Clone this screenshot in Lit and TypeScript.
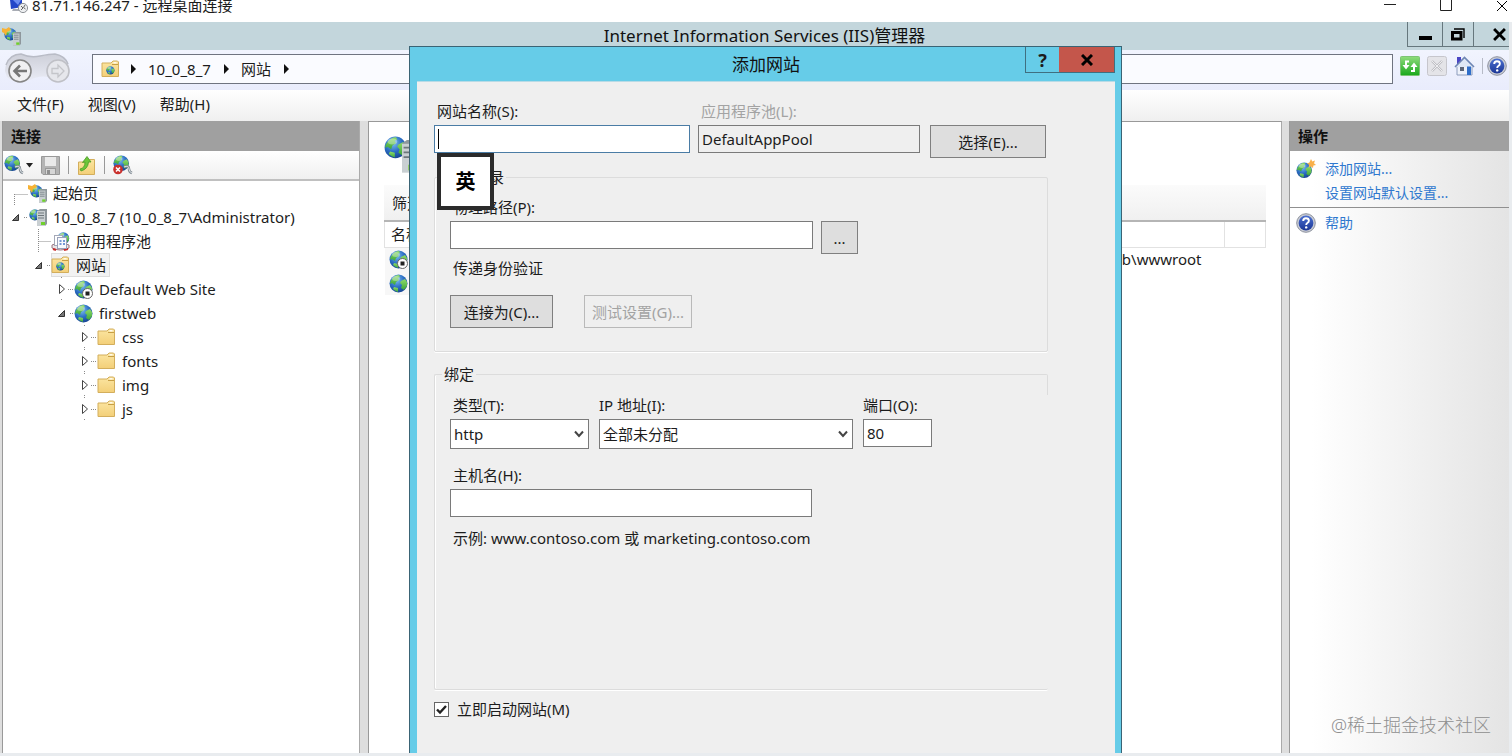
import { LitElement, html, css, svg } from "lit";
import { customElement, state } from "lit/decorators.js";
import { classMap } from "lit/directives/class-map.js";
import { styleMap } from "lit/directives/style-map.js";

type Branch = "start" | "leaf" | "open" | "closed";

interface TreeNode {
  text: string;
  level: number;
  branch: Branch;
  icon: () => unknown;
}

const land = svg`
  <path d="M3 5 Q6 1 10 1 L11 3 L9 4 L10 6 L7 8 L6 11 L3 9 L1 10 Q1 7 3 5Z" fill="url(#land)"/>
  <path d="M12 7 L16 5 L18 8 L18 12 L15 16 L12 14 L13 11 L11 9Z" fill="url(#land)"/>
  <path d="M5 13 L9 14 L9 18 Q6 17 4 15Z" fill="url(#land)"/>`;

const globeShape = svg`
  <circle cx="9.5" cy="9.5" r="9" fill="url(#sea)"/>
  ${land}
  <ellipse cx="7" cy="4.5" rx="4" ry="2.5" fill="#fff" opacity=".35"/>`;

const serverShape = svg`
  <path d="M0 2 L3 0 H10 V15 L8 17 H0Z" fill="#8e979c"/>
  <path d="M0 2 H8 V17 H0Z" fill="#c9cfd2"/>
  <path d="M1 4 H7 M1 6.5 H7 M1 9 H7" stroke="#6f787d" stroke-width="1"/>
  <rect x="4" y="13" width="4" height="3" fill="#6fd02c"/>`;

const icon = (w: number, h: number, body: unknown, box = `0 0 ${w} ${h}`) =>
  html`<svg class="icon" width=${w} height=${h} viewBox=${box} aria-hidden="true">${body}</svg>`;

const globe = () => icon(19, 19, globeShape);

const globeStopped = () =>
  icon(19, 19, svg`${globeShape}
    <circle cx="13.5" cy="13.5" r="5" fill="#fff" stroke="#666"/>
    <rect x="11.5" y="11.5" width="4" height="4" fill="#222"/>`);

const startIcon = () =>
  icon(19, 19, svg`
    <g transform="translate(2 1) scale(.68)">${globeShape}</g>
    <path d="M0 1 L4 2 L7 0 L9 3 L5 5 L4 9 L2 6 L0 5Z" fill="#f7b234"/>
    <g transform="translate(11 5) scale(.8)">${serverShape}</g>`);

const serverIcon = () =>
  icon(19, 19, svg`
    <g transform="translate(1 1) scale(.62)">${globeShape}</g>
    <g transform="translate(9 1)">${serverShape}</g>`);

const poolIcon = () =>
  icon(19, 19, svg`
    <g transform="translate(6 0) scale(.66)">${globeShape}</g>
    <path d="M1 13 Q9 9 18 13 V16 Q9 20 1 16Z" fill="#e9e4e6" stroke="#9a7480"/>
    <path d="M2 17 L5 18 M13 18 L17 17" stroke="#c92a2a" stroke-width="2"/>
    <rect x="3.5" y="3.5" width="8" height="10" fill="#fff" stroke="#a5a9b8"/>
    <rect x="6.5" y="5.5" width="9" height="11" fill="#f7f9fd" stroke="#9aa2ba"/>
    <path d="M8.5 9 H10.5 M8.5 12 H10.5 M12 9 H14 M12 12 H14" stroke="#4a78c8" stroke-width="1.6"/>`);

const folderShape = svg`
  <path d="M1 3 H10 L12 1 H16.5 L17.5 2 V16.5 H1Z" fill="url(#fold)" stroke="#d3ae5c"/>
  <path d="M11 4.5 H17" stroke="#c79f45"/>
  <path d="M12.5 2.8 H15.5" stroke="#fff" stroke-width="1.2"/>`;

const folder = () => icon(19, 18, folderShape);

const folderGlobe = () =>
  icon(19, 18, svg`${folderShape}<g transform="translate(5 6) scale(.46)">${globeShape}</g>`);

const helpIcon = () =>
  icon(20, 20, svg`
    <circle cx="10" cy="10" r="9.3" fill="#c9ccd4" stroke="#8d929e"/>
    <circle cx="10" cy="10" r="7.4" fill="url(#help)"/>
    <path d="M7.2 8 Q7.2 5.2 10 5.2 Q12.9 5.2 12.9 7.7 Q12.9 9 11.3 10 Q10.2 10.7 10.2 12" fill="none" stroke="#fff" stroke-width="1.9"/>
    <circle cx="10.2" cy="14.4" r="1.2" fill="#fff"/>`);

const connectIcon = (failed: boolean) =>
  icon(20, 20, svg`
    <g transform="scale(.86)">${globeShape}</g>
    <path d="M11 12 Q16 10 16 14 Q16 17 19 18" fill="none" stroke="#808a92" stroke-width="2.6"/>
    <path d="M11 12 Q16 10 16 14 Q16 17 19 18" fill="none" stroke="#dfe4e8" stroke-width="1"/>
    ${failed
      ? svg`<circle cx="5" cy="14.5" r="4.8" fill="#c9302c"/><path d="M3 12.5 L7 16.5 M7 12.5 L3 16.5" stroke="#fff" stroke-width="1.6"/>`
      : ""}`);

const branchArt: Record<Branch, unknown> = {
  start: svg`<path d="M4.5 13 V24 M4.5 13.5 H18" class="dots"/>`,
  leaf: svg`<path d="M5.5 0 V24 M5.5 12.5 H18" class="dots"/>`,
  open: svg`<path d="M2.5 15.5 H8.5 V9.5Z" fill="#777" stroke="#333"/><path d="M14 12.5 H18" class="dots"/>`,
  closed: svg`<path d="M3.5 7.5 V16.5 L8.5 12Z" fill="#fff" stroke="#444"/><path d="M12 12.5 H18 M5.5 0 V2 M5.5 22 V24" class="dots"/>`,
};

const chevron = () =>
  html`<svg class="chevron" width="10" height="8" viewBox="0 0 10 8" aria-hidden="true">
    <path d="M1 1.5 L5 6 L9 1.5" fill="none" stroke="#444" stroke-width="2" />
  </svg>`;

@customElement("app-root")
export class AppRoot extends LitElement {
  @state() private selected = "网站";
  @state() private autoStart = true;

  private nodes: TreeNode[] = [
    { text: "起始页", level: 0, branch: "start", icon: startIcon },
    { text: "10_0_8_7 (10_0_8_7\\Administrator)", level: 0, branch: "open", icon: serverIcon },
    { text: "应用程序池", level: 1, branch: "leaf", icon: poolIcon },
    { text: "网站", level: 1, branch: "open", icon: folderGlobe },
    { text: "Default Web Site", level: 2, branch: "closed", icon: globeStopped },
    { text: "firstweb", level: 2, branch: "open", icon: globe },
    { text: "css", level: 3, branch: "closed", icon: folder },
    { text: "fonts", level: 3, branch: "closed", icon: folder },
    { text: "img", level: 3, branch: "closed", icon: folder },
    { text: "js", level: 3, branch: "closed", icon: folder },
  ];

  static styles = css`
    :host {
      display: flex;
      flex-direction: column;
      position: relative;
      height: 100vh;
      overflow: hidden;
      background: #e9ecef;
      color: #1c1c1c;
      font: 15px/20px "Noto Sans", "Noto Sans CJK SC", sans-serif;
    }
    * { box-sizing: border-box; }
    button, input, select { font: inherit; color: inherit; margin: 0; border-radius: 0; }
    button { cursor: pointer; }
    svg { display: block; flex: none; }
    .defs { position: absolute; }
    .plain { border: 0; padding: 0; background: none; display: flex; align-items: center; justify-content: center; }
    .dots { fill: none; stroke: #8a8a8a; stroke-dasharray: 1 1; }

    .remote {
      flex: none;
      display: flex;
      align-items: flex-start;
      gap: 4px;
      height: 22px;
      padding: 0 2px 0 8px;
      background: #fff;
      line-height: 10px;
    }
    .remote .name { flex: 1; }
    .remote .plain { width: 16px; height: 12px; margin-left: 36px; }

    .manager { flex: 1; display: flex; flex-direction: column; min-height: 0; margin: 0 3px 3px 0; }
    .titlebar {
      display: grid;
      grid-template-columns: 120px 1fr 102px;
      height: 28px;
      padding-left: 2px;
      background: #c3d6dc;
      align-items: center;
    }
    h1 {
      margin: 0;
      font-size: 17px;
      font-weight: 400;
      line-height: 28px;
      text-align: center;
      color: #111;
    }
    .caption { align-self: start; display: grid; grid-template-columns: 34px 31px 1fr; height: 25px; border: 1px solid #66777d; border-width: 0 0 1px 1px; }
    .caption .plain + .plain { border-left: 1px solid #66777d; }
    .caption .plain:last-child { padding-left: 16px; }

    .nav { display: flex; align-items: center; height: 40px; padding: 0 2px 3px 4px; background: linear-gradient(#f1f4fe, #e9ecfc); }
    .travel { width: 88px; padding: 0; }
    .address {
      flex: 1;
      display: flex;
      align-items: center;
      gap: 12px;
      height: 30px;
      padding-left: 8px;
      border: 1px solid #6f7480;
      background: #fafbff;
      line-height: 28px;
    }
    .address .icon { margin-right: -2px; }
    .address a { color: inherit; text-decoration: none; }
    .navtools { display: flex; align-items: center; gap: 7px; padding: 0 0 6px 7px; }
    .rule { width: 1px; height: 16px; background: #b6bac6; }
    .navtools .rule { margin-right: -3px; }

    .menu { display: flex; gap: 24px; height: 31px; padding: 0 0 3px 17px; background: linear-gradient(#fff, #efefef); }

    .body { flex: 1; display: grid; grid-template-columns: 358px minmax(0, 1fr) 220px; gap: 8px; column-gap: 7px; min-height: 0; padding-left: 2px; background: #dedede; }
    .pane { border-left: 1px solid #999; border-right: 1px solid #aaa; background: #fff; min-height: 0; overflow: hidden; }
    h2 { margin: 0; padding: 0 8px; height: 30px; font-size: 15px; line-height: 30px; font-weight: 700; background: #a0a0a0; color: #111; }
    .toolbar { display: flex; align-items: center; gap: 8px; height: 30px; padding-left: 1px; background: linear-gradient(#fff, #f0f0f0); border-bottom: 2px solid #c0c0c0; }
    .toolbar .plain { gap: 2px; }
    .toolbar .rule { height: 18px; background: #999; }
    .tree { list-style: none; margin: 0; padding: 0; }
    .tree li { display: flex; align-items: center; height: 24px; padding-left: 7px; }
    .node { display: flex; align-items: center; gap: 6px; height: 24px; padding: 0 4px 0 0; border: 0; background: none; white-space: nowrap; }
    .node.on { background: #f2f2f2; box-shadow: inset 0 0 0 1px #ddd; }

    .content { margin-left: 1px; border-top: 1px solid #999; padding: 14px 15px 0; display: flex; flex-direction: column; }
    .hero { display: flex; height: 49px; }
    .filter { height: 37px; padding: 0 8px; line-height: 36px; background: linear-gradient(#fbfbfb, #f0f0f0); border-bottom: 2px solid #b5b5b5; }
    table { width: 100%; border-collapse: collapse; table-layout: fixed; }
    th { height: 25px; padding: 0 6px; text-align: left; font-weight: 400; border: 1px solid #e2e2e2; border-top: 0; }
    td { height: 24px; padding: 0 4px; }
    td.path { text-align: right; padding-right: 23px; }
    td:first-child { background: #f7f7f7; }

    .actions { border-right: 0; background: linear-gradient(90deg, #fff 10%, #e4e4e4); }
    .actions ul { list-style: none; margin: 0; padding: 6px 0 2px; font-size: 14px; }
    .actions ul + ul { border-top: 1px solid #909090; padding-top: 3px; }
    .actions li { display: grid; grid-template-columns: 20px 1fr; gap: 9px; height: 24px; padding-left: 6px; align-items: center; }
    .actions a { color: #2f78cf; text-decoration: none; grid-column: 2; }

    .dialog {
      position: absolute;
      top: 46px;
      bottom: 3px;
      left: calc(50% - 347px);
      width: 713px;
      display: flex;
      flex-direction: column;
      border: 1px solid #3a6475;
      border-bottom: 0;
      padding: 0 6px 0 7px;
      background: #66cce8;
    }
    .dialog header { display: grid; grid-template-columns: 90px 1fr 90px; height: 34px; }
    .dialog h1 { line-height: 36px; }
    .dialog header .caps { grid-column: 3; display: flex; height: 26px; border: 1px solid #3f6f80; border-top: 0; }
    .help { width: 33px; font-size: 18px; font-weight: 700; }
    .close { flex: 1; }
    .dialog .close { background: #c4564b; }
    form { flex: 1; display: flex; flex-direction: column; min-height: 0; margin: 0; padding: 19px 67px 34px 17px; background: #efefef; border-top: 1px solid #b8dbe6; }
    .row { display: flex; align-items: flex-start; gap: 8px; }
    .field { display: flex; flex-direction: column; gap: 4px; position: relative; }
    .field label, .note { padding-left: 3px; }
    .binding .row { gap: 10px; }
    .field label.flush { padding-left: 0; }
    .text, .pick select { height: 28px; padding: 0 3px; border: 1px solid #7a7a7a; background: #fff; outline: 0; width: 100%; }
    .text.active { border-color: #4a7ca5; background: linear-gradient(#000, #000) 3px 3px / 1px 20px no-repeat #fff; }
    .text.locked { background: #efefef; }
    .muted { color: #a3a3a3; }
    .btn { height: 33px; padding: 0; border: 1px solid #7f7f7f; background: #dedede; }
    .btn:disabled { background: #efefef; border-color: #b9b9b9; color: #a3a3a3; cursor: default; }
    .under { margin-top: 24px; }
    .w-name { width: 256px; }
    .w-pool { width: 222px; }
    .w-choose { width: 116px; margin-left: 2px; }
    .w-path { width: 363px; }
    .w-dots { width: 37px; }
    .w-type { width: 139px; }
    .w-ip { width: 254px; }
    .w-port { width: 69px; }

    fieldset { min-width: 0; margin: 0; padding: 11px 16px 23px 15px; border: 1px solid #dcdcdc; border-radius: 2px; box-shadow: inset 1px 0 #fff, 0 1px #fff; }
    legend { padding: 0 2px; margin-left: -8px; }
    .directory { margin-top: 9px; padding-top: 10px; }
    .binding { flex: 1; margin-top: 12px; border-right: 0; background: linear-gradient(#dcdcdc, #dcdcdc) right top / 1px 20px no-repeat; }
    .note { margin: 4px 0 0; }
    .buttons { gap: 31px; margin-top: 17px; }
    .w-connect { width: 103px; }
    .w-test { width: 108px; }
    .host { margin-top: 16px; width: 362px; }
    .example { margin-top: 11px; }
    .pick { display: grid; align-items: center; }
    .pick > * { grid-area: 1 / 1; }
    .pick select { appearance: none; height: 30px; }
    .chevron { justify-self: end; margin-right: 5px; pointer-events: none; }

    .start { display: flex; align-items: center; gap: 8px; margin-top: 9px; }
    .tick { display: grid; place-items: center; }
    .tick > * { grid-area: 1 / 1; }
    .tick input { appearance: none; width: 15px; height: 15px; border: 1px solid #666; background: #fff; }
    .tick svg { pointer-events: none; }

    .ime {
      position: absolute;
      z-index: 1;
      left: 3px;
      top: 100%;
      display: grid;
      place-items: center;
      width: 57px;
      height: 57px;
      border: 4px solid #2b2b2b;
      background: #fff;
      color: #000;
      font-size: 20px;
      font-weight: 700;
    }
    .watermark { position: absolute; right: 21px; bottom: 19px; font-size: 18px; line-height: 24px; color: #8f8f8f; font-weight: 300; }
  `;

  private renderCross(size: number, width: number) {
    return html`<svg width=${size} height=${size} viewBox="0 0 12 12" aria-hidden="true">
      <path d="M1 1 L11 11 M11 1 L1 11" fill="none" stroke="#000" stroke-width=${width} />
    </svg>`;
  }

  private renderNode(node: TreeNode) {
    const on = node.text === this.selected;
    return html`<li role="treeitem" aria-selected=${on}>
      <span style=${styleMap({ width: `${node.level * 23}px` })}></span>
      <svg width="18" height="24" viewBox="0 0 18 24" aria-hidden="true">${branchArt[node.branch]}</svg>
      <button class=${classMap({ node: true, on })} @click=${() => (this.selected = node.text)}>
        ${node.icon()}<span>${node.text}</span>
      </button>
    </li>`;
  }

  private renderArrow() {
    return html`<svg width="6" height="10" viewBox="0 0 6 10" aria-hidden="true"><path d="M1 0 L6 5 L1 10Z" fill="#111" /></svg>`;
  }

  private renderNav() {
    return html`<div class="nav">
      <button class="plain travel" aria-label="后退 前进">
        <svg width="88" height="34" viewBox="0 0 88 34" aria-hidden="true">
          <path d="M1 19 Q2 2 17 2 Q25 5 36 4 Q46 2 51 2 Q65 4 65 17 Q60 28 50 26 Q36 22 26 28 Q12 33 3 25Z" fill="url(#pad)" />
          <path d="M2 13 Q6 2 17 2 Q26 6 36 4 Q46 2 51 2 Q61 4 64 12" fill="none" stroke="#b9bcc6" stroke-width="1.5" />
          <circle cx="16" cy="19" r="11" fill="#f1f1f3" stroke="#858585" stroke-width="1.6" />
          <path d="M23 19 H11 M16 13.5 L10.5 19 L16 24.5" fill="none" stroke="#777" stroke-width="2.6" />
          <circle cx="54" cy="19" r="11" fill="#e6e7ec" stroke="#bfc0c6" stroke-width="1.6" />
          <path d="M48 16.5 H54 V13 L60 19 L54 25 V21.5 H48Z" fill="none" stroke="#c4c5ca" stroke-width="1.3" />
        </svg>
      </button>
      <nav class="address" aria-label="地址">
        ${folderGlobe()}${this.renderArrow()}<a href="#server">10_0_8_7</a>${this.renderArrow()}<a href="#sites">网站</a>${this.renderArrow()}
      </nav>
      <div class="navtools">
        <button class="plain" aria-label="刷新">${icon(20, 20, svg`
          <rect x=".5" y=".5" width="19" height="19" rx="1" fill="url(#go)" stroke="#7cc474"/>
          <path d="M9 5.5 H6 V11" fill="none" stroke="#fff" stroke-width="2"/>
          <path d="M2.5 9 H9.5 L6 13.5Z" fill="#fff"/>
          <path d="M11 15 H14 V9" fill="none" stroke="#fff" stroke-width="2"/>
          <path d="M10.5 11 H17.5 L14 6.5Z" fill="#fff"/>`)}</button>
        <button class="plain" aria-label="停止">${icon(20, 20, svg`
          <rect x=".5" y=".5" width="19" height="19" rx="2" fill="#e4e4e8" stroke="#c6c6cc"/>
          <path d="M5 5 L15 15 M15 5 L5 15" stroke="#bdbdc2" stroke-width="2.4"/>
          <path d="M5 5 L15 15 M15 5 L5 15" stroke="#ededf0" stroke-width="1"/>`)}</button>
        <button class="plain" aria-label="主页">${icon(21, 20, svg`
          <rect x="3" y="1" width="4" height="7" fill="#4b46c4"/>
          <path d="M3 9 H18 V19 H3Z" fill="#eef2fa" stroke="#8c9cbc"/>
          <path d="M1 11 L10.5 1.5 L20 11" fill="#dfe8f6" stroke="#6f86b4" stroke-width="1.6"/>
          <rect x="6" y="11" width="4" height="4" fill="#5c6678"/>
          <rect x="13" y="10.5" width="4" height="8.5" fill="#2f6ec9"/>`)}</button>
        <span class="rule"></span>
        <button class="plain" aria-label="帮助">${helpIcon()}</button>
      </div>
    </div>`;
  }

  private renderTreePane() {
    return html`<section class="pane">
      <h2>连接</h2>
      <div class="toolbar">
        <button class="plain" aria-label="创建连接">${connectIcon(false)}<svg width="7" height="5" viewBox="0 0 7 5" aria-hidden="true"><path d="M0 0 H7 L3.5 4.5Z" fill="#222"/></svg></button>
        <button class="plain" aria-label="保存">${icon(19, 19, svg`
          <path d="M.5 .5 H18.5 V18.5 H2 L.5 17Z" fill="#b4b4b4" stroke="#999"/>
          <rect x="4" y="1" width="11" height="9" fill="#e9e9e9"/>
          <rect x="4.5" y="12.5" width="10" height="6" fill="#d6d6d6" stroke="#999"/>
          <rect x="6" y="14" width="3" height="4" fill="#8f8f8f"/>`)}</button>
        <span class="rule"></span>
        <button class="plain" aria-label="向上">${icon(19, 19, svg`
          <path d="M1.5 6 H11 L12.5 3.5 H17.5 V18.5 H1.5Z" fill="url(#fold)" stroke="#d3ae5c"/>
          <path d="M3 13 Q8 12 8 6 L5.5 6.5 L10 .5 L14 6 L11.5 6 Q11 13 4 15Z" fill="#6cc63a" stroke="#4a9a25" stroke-width=".8"/>`)}</button>
        <span class="rule"></span>
        <button class="plain" aria-label="断开">${connectIcon(true)}</button>
      </div>
      <ul class="tree" role="tree">${this.nodes.map((n) => this.renderNode(n))}</ul>
    </section>`;
  }

  private renderContent() {
    return html`<main class="pane content">
      <div class="hero">
        <svg width="38" height="38" viewBox="0 0 38 38" aria-hidden="true">
          <g transform="scale(1.2)">${globeShape}</g>
          <g transform="translate(18 4) scale(1.6 1.9)">${serverShape}</g>
        </svg>
      </div>
      <div class="filter">筛选</div>
      <table>
        <colgroup><col style="width: 120px" /><col /><col style="width: 41px" /></colgroup>
        <thead><tr><th>名称</th><th></th><th></th></tr></thead>
        <tbody>
          <tr><td>${globeStopped()}</td><td class="path">inetpub\\wwwroot</td><td></td></tr>
          <tr><td>${globe()}</td><td></td><td></td></tr>
        </tbody>
      </table>
    </main>`;
  }

  private renderActions() {
    return html`<aside class="pane actions">
      <h2>操作</h2>
      <ul>
        <li>${icon(20, 20, svg`
          <g transform="translate(0 3) scale(.86)">${globeShape}</g>
          <path d="M15 0 L16.3 2.4 L19 1.6 L18 4.2 L20 6 L17.4 6.6 L17 9 L15 7.4 L12.6 8.4 L13 5.8 L11 4.4 L13.4 3.4Z" fill="#f9b04a"/>`)}<a href="#add">添加网站...</a></li>
        <li><a href="#defaults">设置网站默认设置...</a></li>
      </ul>
      <ul>
        <li>${helpIcon()}<a href="#help">帮助</a></li>
      </ul>
    </aside>`;
  }

  private renderDialog() {
    return html`<div class="dialog" role="dialog" aria-labelledby="dialog-title">
      <header>
        <span></span>
        <h1 id="dialog-title">添加网站</h1>
        <div class="caps">
          <button class="plain help" aria-label="帮助">?</button>
          <button class="plain close" aria-label="关闭">${this.renderCross(12, 3)}</button>
        </div>
      </header>
      <form @submit=${(e: Event) => e.preventDefault()}>
        <div class="row">
          <div class="field w-name">
            <label for="site">网站名称(S):</label>
            <input id="site" class="text active" autocomplete="off" />
            <div class="ime">英</div>
          </div>
          <div class="field w-pool">
            <label for="pool" class="muted">应用程序池(L):</label>
            <input id="pool" class="text locked" readonly value="DefaultAppPool" />
          </div>
          <button type="button" class="btn w-choose under">选择(E)...</button>
        </div>

        <fieldset class="directory">
          <legend>内容目录</legend>
          <div class="row">
            <div class="field w-path">
              <label for="path">物理路径(P):</label>
              <input id="path" class="text" />
            </div>
            <button type="button" class="btn w-dots under" aria-label="浏览">...</button>
          </div>
          <p class="note">传递身份验证</p>
          <div class="row buttons">
            <button type="button" class="btn w-connect">连接为(C)...</button>
            <button type="button" class="btn w-test" disabled>测试设置(G)...</button>
          </div>
        </fieldset>

        <fieldset class="binding">
          <legend>绑定</legend>
          <div class="row">
            <div class="field w-type">
              <label for="type">类型(T):</label>
              <div class="pick"><select id="type"><option>http</option></select>${chevron()}</div>
            </div>
            <div class="field w-ip">
              <label for="ip" class="flush">IP 地址(I):</label>
              <div class="pick"><select id="ip"><option>全部未分配</option></select>${chevron()}</div>
            </div>
            <div class="field w-port">
              <label for="port" class="flush">端口(O):</label>
              <input id="port" class="text" value="80" />
            </div>
          </div>
          <div class="field host">
            <label for="host">主机名(H):</label>
            <input id="host" class="text" />
          </div>
          <p class="note example">示例: www.contoso.com 或 marketing.contoso.com</p>
        </fieldset>

        <div class="start">
          <span class="tick">
            <input id="start" type="checkbox" .checked=${this.autoStart}
              @change=${(e: Event) => (this.autoStart = (e.target as HTMLInputElement).checked)} />
            ${this.autoStart
              ? html`<svg width="11" height="11" viewBox="0 0 11 11" aria-hidden="true"><path d="M1 5.5 L4 8.5 L10 2" fill="none" stroke="#222" stroke-width="2.4" /></svg>`
              : ""}
          </span>
          <label for="start">立即启动网站(M)</label>
        </div>
      </form>
    </div>`;
  }

  render() {
    return html`
      <svg class="defs" width="0" height="0" aria-hidden="true">
        <defs>
          <radialGradient id="sea" cx=".4" cy=".3" r=".8"><stop offset="0" stop-color="#7fc0f2"/><stop offset=".5" stop-color="#2c6fc4"/><stop offset="1" stop-color="#123a86"/></radialGradient>
          <linearGradient id="land" x2="0" y2="1"><stop offset="0" stop-color="#8edb6a"/><stop offset="1" stop-color="#3da63b"/></linearGradient>
          <linearGradient id="fold" x2="0" y2="1"><stop offset="0" stop-color="#fbe6a2"/><stop offset="1" stop-color="#f3cf78"/></linearGradient>
          <linearGradient id="help" x2="0" y2="1"><stop offset="0" stop-color="#4a6fd0"/><stop offset="1" stop-color="#1c3796"/></linearGradient>
          <linearGradient id="go" x2="0" y2="1"><stop offset="0" stop-color="#8fdc7c"/><stop offset="1" stop-color="#19a81b"/></linearGradient>
          <linearGradient id="pad" x2="0" y2="1"><stop offset="0" stop-color="#cdcfd8"/><stop offset="1" stop-color="#ebedf7"/></linearGradient>
        </defs>
      </svg>

      <div class="remote">
        <svg width="20" height="14" viewBox="0 0 20 14" aria-hidden="true">
          <path d="M2 0 H14 V7 L3 9Z" fill="#2346c8"/>
          <path d="M5 0 H13 L10 5Z" fill="#6b8cf0"/>
          <path d="M5 9 H13 L14 11 H4Z" fill="#a9adb5"/>
          <circle cx="15" cy="8" r="4.6" fill="#eceef0" stroke="#8e9297"/>
          <path d="M13 10 L15 8 L13 6 M17 5 L15.5 7.5 L17.5 9" fill="none" stroke="#666"/>
        </svg>
        <span class="name">81.71.146.247 - 远程桌面连接</span>
        <button class="plain" aria-label="最小化"><svg width="12" height="12" viewBox="0 0 12 12"><path d="M0 4.5 H12" stroke="#222"/></svg></button>
        <button class="plain" aria-label="最大化"><svg width="12" height="12" viewBox="0 0 12 12"><path d="M.5 0 V10.5 H11.5 V0" fill="none" stroke="#222"/></svg></button>
        <button class="plain" aria-label="关闭">${this.renderCross(12, 1)}</button>
      </div>

      <div class="manager">
        <div class="titlebar">
          ${startIcon()}
          <h1>Internet Information Services (IIS)管理器</h1>
          <div class="caption">
            <button class="plain" aria-label="最小化"><svg width="13" height="14" viewBox="0 0 13 14"><rect y="9" width="13" height="4"/></svg></button>
            <button class="plain" aria-label="还原"><svg width="14" height="13" viewBox="0 0 14 13"><path d="M3 1 H13 V10" fill="none" stroke="#000" stroke-width="1.4"/><rect x="1.5" y="4.5" width="8.5" height="6.5" fill="none" stroke="#000" stroke-width="3"/></svg></button>
            <button class="plain" aria-label="关闭">${this.renderCross(13, 2.6)}</button>
          </div>
        </div>
        ${this.renderNav()}
        <div class="menu">
          <button class="plain">文件(F)</button>
          <button class="plain">视图(V)</button>
          <button class="plain">帮助(H)</button>
        </div>
        <div class="body">
          ${this.renderTreePane()}${this.renderContent()}${this.renderActions()}
        </div>
      </div>

      ${this.renderDialog()}
      <div class="watermark">@稀土掘金技术社区</div>
    `;
  }
}
